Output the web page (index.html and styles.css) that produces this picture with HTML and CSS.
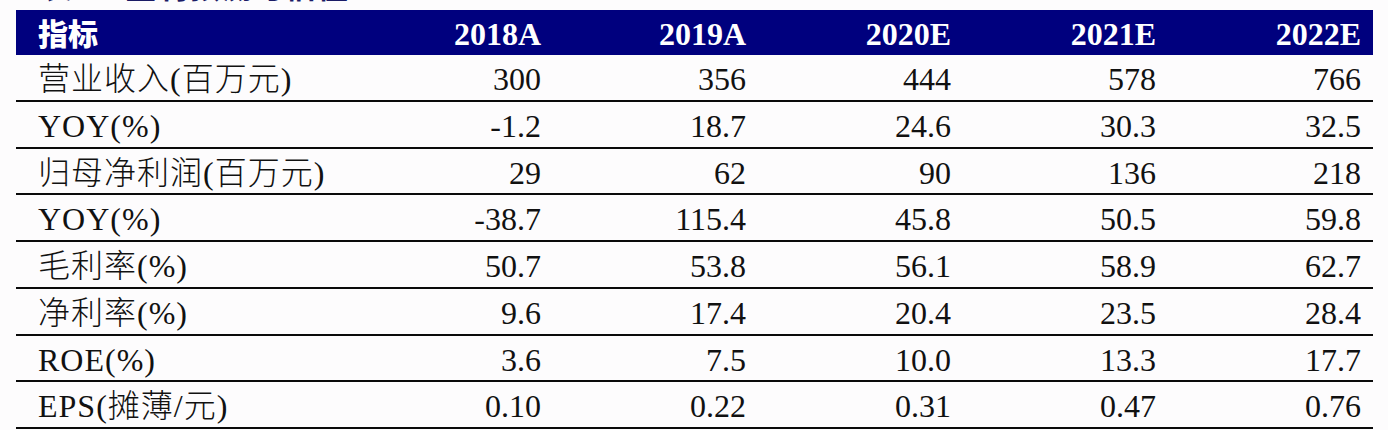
FILE: index.html
```html
<!DOCTYPE html>
<html lang="zh-CN">
<head>
<meta charset="utf-8">
<title>盈利预测</title>
<link rel="stylesheet" href="styles.css">
</head>
<body>
<div class="page">
  <div class="title"><span class="title-text">表1：盈利预测与估值</span></div>
  <div class="table">
    <div class="row head">
      <div class="label">指标</div>
      <div class="num">2018A</div>
      <div class="num">2019A</div>
      <div class="num">2020E</div>
      <div class="num">2021E</div>
      <div class="num">2022E</div>
    </div>
    <div class="row">
      <div class="label">营业收入(百万元)</div>
      <div class="num">300</div><div class="num">356</div><div class="num">444</div><div class="num">578</div><div class="num">766</div>
    </div>
    <div class="row">
      <div class="label">YOY(%)</div>
      <div class="num">-1.2</div><div class="num">18.7</div><div class="num">24.6</div><div class="num">30.3</div><div class="num">32.5</div>
    </div>
    <div class="row">
      <div class="label">归母净利润(百万元)</div>
      <div class="num">29</div><div class="num">62</div><div class="num">90</div><div class="num">136</div><div class="num">218</div>
    </div>
    <div class="row">
      <div class="label">YOY(%)</div>
      <div class="num">-38.7</div><div class="num">115.4</div><div class="num">45.8</div><div class="num">50.5</div><div class="num">59.8</div>
    </div>
    <div class="row">
      <div class="label">毛利率(%)</div>
      <div class="num">50.7</div><div class="num">53.8</div><div class="num">56.1</div><div class="num">58.9</div><div class="num">62.7</div>
    </div>
    <div class="row">
      <div class="label">净利率(%)</div>
      <div class="num">9.6</div><div class="num">17.4</div><div class="num">20.4</div><div class="num">23.5</div><div class="num">28.4</div>
    </div>
    <div class="row">
      <div class="label">ROE(%)</div>
      <div class="num">3.6</div><div class="num">7.5</div><div class="num">10.0</div><div class="num">13.3</div><div class="num">17.7</div>
    </div>
    <div class="row">
      <div class="label">EPS(摊薄/元)</div>
      <div class="num">0.10</div><div class="num">0.22</div><div class="num">0.31</div><div class="num">0.47</div><div class="num">0.76</div>
    </div>
  </div>
</div>
</body>
</html>
```

FILE: styles.css
```css
html, body {
  margin: 0;
  padding: 0;
  background: #fdfcfd;
}

.page {
  padding-left: 16px;
  width: 1357px;
}

.title {
  height: 10px;
  overflow: hidden;
}

.title-text {
  display: block;
  margin-top: -30px;
  margin-left: 26px;
  font-family: "Noto Sans CJK SC", sans-serif;
  font-weight: 700;
  font-size: 30px;
  line-height: 30px;
  letter-spacing: 2px;
  color: #1b1b66;
}

.table {
  display: flex;
  flex-direction: column;
}

.row {
  display: grid;
  grid-template-columns: 332px repeat(5, 205px);
  height: 44.75px;
  border-bottom: 2px solid #0a0a0a;
  font-family: "Liberation Serif", "Noto Sans CJK SC", serif;
  font-size: 32px;
  line-height: 44.75px;
  color: #111;
}

.row > div {
  padding-top: 2px;
  white-space: nowrap;
}

.label {
  padding-left: 22px;
  letter-spacing: 1px;
  font-weight: 300;
}

.num {
  text-align: right;
  padding-right: 12px;
}

.head {
  height: 45px;
  line-height: 45px;
  border-bottom: none;
  background: #00007e;
  color: #ffffff;
  font-weight: 700;
}

.head .label {
  font-family: "Noto Sans CJK SC", sans-serif;
  font-size: 30px;
  font-weight: 900;
  letter-spacing: 0;
  padding-top: 0;
}
```
